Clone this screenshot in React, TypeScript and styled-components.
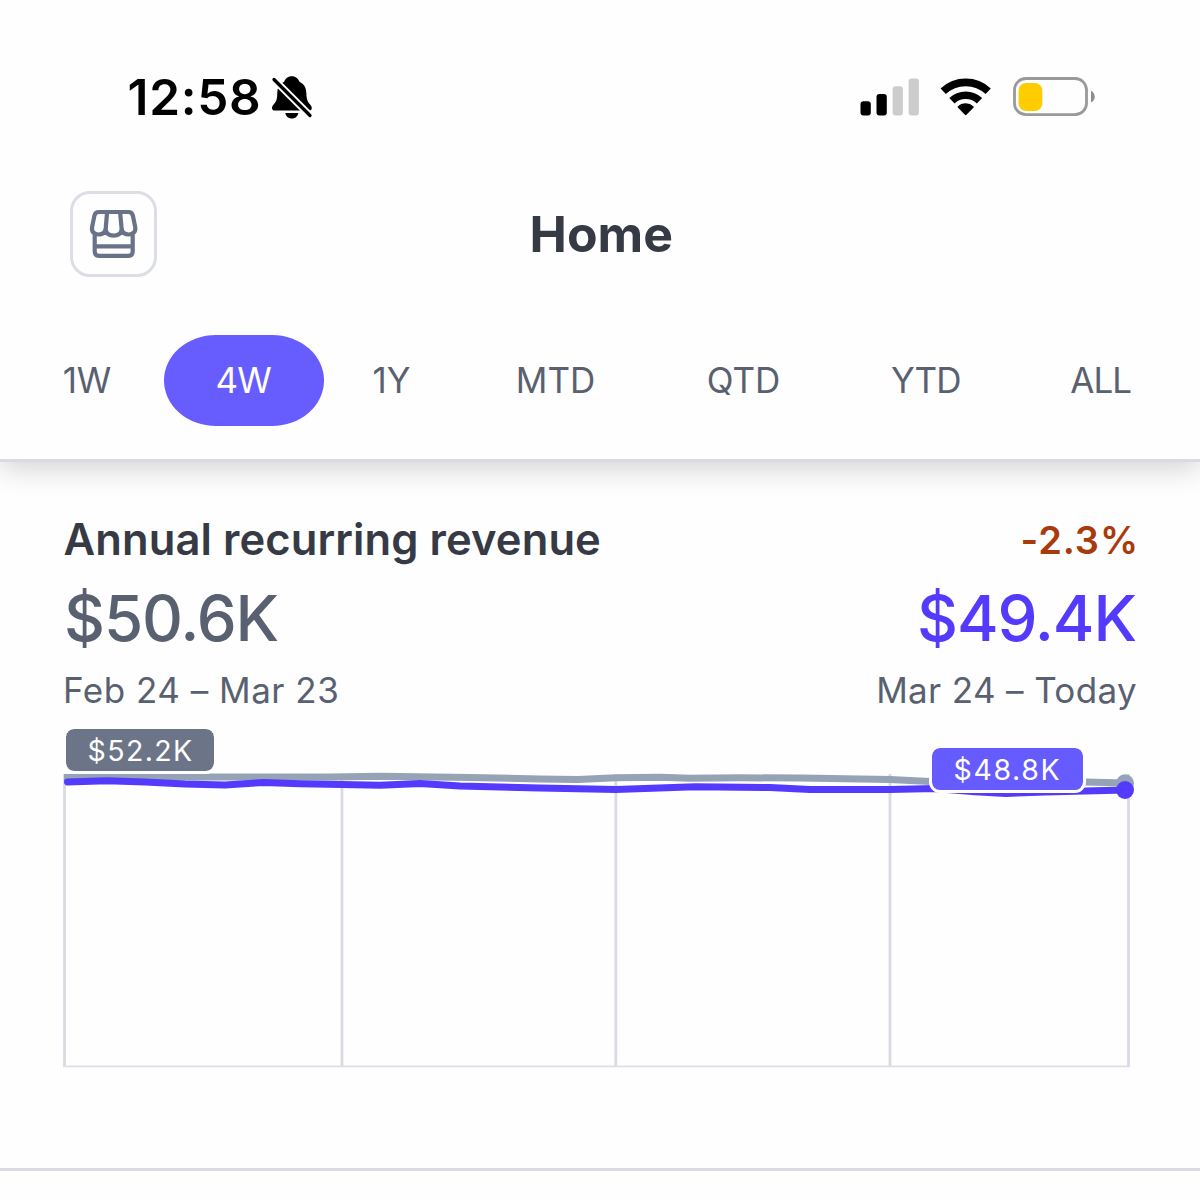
import React from "react";
import styled, { createGlobalStyle } from "styled-components";

const GlobalStyle = createGlobalStyle`
  * { box-sizing: border-box; }
  body { margin: 0; background: #fefefe; }
`;

const Screen = styled.main`
  width: 1200px;
  height: 1200px;
  overflow: hidden;
  display: flex;
  flex-direction: column;
  background: #fefefe;
  color: #353a44;
  font-family: Inter, "Liberation Sans", sans-serif;
  white-space: nowrap;
`;

const TopPanel = styled.header`
  position: relative;
  flex: none;
  height: 462px;
  background: #fefefe;
  border-bottom: 3px solid #d8dbe1;
  box-shadow: 0 8px 26px rgba(0, 0, 0, 0.16);
`;

const StatusBar = styled.div`
  display: flex;
  justify-content: space-between;
  align-items: center;
  height: 148px;
  padding: 46px 104px 0 127.5px;
`;

const Clock = styled.div`
  display: flex;
  align-items: center;
  gap: 10px;
  color: #000;
  font-size: 49.5px;
  font-weight: 600;
  letter-spacing: 0.7px;
  line-height: 60px;
`;

const StatusIcons = styled.div`
  display: flex;
  align-items: center;
`;

const NavBar = styled.nav`
  display: grid;
  grid-template-columns: 87px 1fr 87px;
  align-items: center;
  height: 172px;
  padding: 0 70px;
`;

const StoreButton = styled.button`
  display: flex;
  align-items: center;
  justify-content: center;
  width: 87px;
  height: 86px;
  padding: 0;
  border: 3px solid #dcdee6;
  border-radius: 20px;
  background: #fefefe;
`;

const Title = styled.h1`
  margin: 0;
  padding-left: 2.5px;
  text-align: center;
  font-size: 50px;
  font-weight: 700;
  letter-spacing: 0;
  line-height: 60px;
`;

const Tabs = styled.div`
  display: grid;
  grid-template-columns: 154px 160px 135px 193px 183px 183px 167px;
  margin: 15px 14px 0 10px;
`;

const Tab = styled.button<{ $active?: boolean; $tight?: boolean }>`
  height: 91px;
  padding: 0 ${(p) => (p.$tight ? 1.5 : 0)}px 1px 0;
  border: 0;
  border-radius: 52px / 45.5px;
  background: ${(p) => (p.$active ? "#675dff" : "transparent")};
  color: ${(p) => (p.$active ? "#fff" : "#596171")};
  font: 400 35px / 90px Inter, "Liberation Sans", sans-serif;
  letter-spacing: ${(p) => (p.$tight ? "-0.9px" : "0")};
`;

const Metric = styled.section`
  display: flex;
  flex-direction: column;
  flex: none;
  height: 708.5px;
  padding-top: 52px;
  border-bottom: 3px solid #dadae5;
`;

const MetricRow = styled.div<{ $height: number; $gap?: number }>`
  display: flex;
  justify-content: space-between;
  align-items: center;
  height: ${(p) => p.$height}px;
  margin-top: ${(p) => p.$gap ?? 0}px;
  padding: 0 64px;
`;

const MetricName = styled.h2`
  margin: 0 0 0 -0.5px;
  font-size: 43.5px;
  font-weight: 600;
  letter-spacing: 0.1px;
`;

const Change = styled.span`
  margin-right: -3px;
  padding-top: 2px;
  color: #a93a0b;
  font-size: 38px;
  font-weight: 600;
  letter-spacing: 0.9px;
`;

const Amount = styled.span<{ $current?: boolean }>`
  color: ${(p) => (p.$current ? "#533afd" : "#596171")};
  font-size: 63.5px;
  font-weight: 500;
  letter-spacing: -1.1px;
`;

const Period = styled.span<{ $spacing: number; $shift: number }>`
  margin-left: ${(p) => p.$shift}px;
  margin-right: ${(p) => -1 - p.$shift}px;
  color: #596171;
  font-size: 35px;
  letter-spacing: ${(p) => p.$spacing}px;
`;

const Chart = styled.div`
  position: relative;
  height: 350px;
  margin-top: 12px;
`;

const ChartLabel = styled.span<{ $current?: boolean }>`
  position: absolute;
  left: ${(p) => (p.$current ? 929 : 63)}px;
  top: ${(p) => (p.$current ? 22 : 3)}px;
  width: ${(p) => (p.$current ? 157 : 154)}px;
  height: 48px;
  padding-left: 21.5px;
  border: 3px solid #fefefe;
  border-radius: 11px;
  background: ${(p) => (p.$current ? "#665bff" : "#6c7488")};
  background-clip: padding-box;
  color: #fff;
  font-size: 28.5px;
  line-height: 44px;
  letter-spacing: ${(p) => (p.$current ? 1.6 : 1.4)}px;
`;

function MutedBell() {
  return (
    <svg width="42" height="44" viewBox="272 75.500 42 44">
      <path
        d="M292.700 76.700c-4 0-6.600 2.600-7.500 5.500-5 2.200-6.700 6-6.900 11-.2 6-.7 8.500-3.700 11.800-1.200 1.400-1.600 2.400-1.600 3.400 0 1.600 1.200 2.600 3 2.600h33.800c1.900 0 3-1 3-2.600 0-1-.5-2-1.700-3.400-3-3.300-3.500-5.800-3.800-11.800-.2-5-1.900-8.800-6.900-11-.9-2.900-3.600-5.500-7.700-5.500Z"
        fill="#000"
      />
      <path d="M286.300 113.500h13c-.6 3.300-3 5.500-6.500 5.500s-5.900-2.200-6.500-5.500Z" fill="#000" />
      <path d="M275 80 311 116" stroke="#fefefe" strokeWidth="7.400" strokeLinecap="round" />
      <path d="M275 80 311 116" stroke="#000" strokeWidth="3.300" strokeLinecap="round" />
    </svg>
  );
}

const signalBars = [
  { x: 860.5, y: 101.3, on: true },
  { x: 876.5, y: 94, on: true },
  { x: 892.6, y: 86.3, on: false },
  { x: 908.6, y: 78.6, on: false },
];

function StatusGlyphs() {
  return (
    <svg width="240" height="44" viewBox="856 75 240 44" fill="none">
      {signalBars.map((b) => (
        <rect key={b.x} x={b.x} y={b.y} width="10.300" height={115.6 - b.y} rx="3" fill={b.on ? "#000" : "#ccc"} />
      ))}
      <g stroke="#000" strokeWidth="7.600">
        <path d="M943.200 91.300a32.800 32.800 0 0 1 45 0" />
        <path d="M951.900 100.700a20 20 0 0 1 27.600 0" />
      </g>
      <path
        d="M965.700 114.600 958.300 107a10.800 10.800 0 0 1 14.800 0Z"
        fill="#000"
        stroke="#000"
        strokeWidth="1.400"
        strokeLinejoin="round"
      />
      <rect x="1014.500" y="78.500" width="72" height="36.200" rx="11.500" stroke="#999" strokeWidth="2.800" />
      <rect x="1018.600" y="83" width="23.700" height="28" rx="7.500" fill="#fc0" />
      <path d="M1091 91c2.300.8 3.700 3 3.700 5.700s-1.400 4.900-3.700 5.700Z" fill="#8c8c8c" />
    </svg>
  );
}

function StoreIcon() {
  return (
    <svg
      width="50"
      height="50"
      viewBox="88.800 209 50 50"
      fill="none"
      stroke="#6a7287"
      strokeWidth="4.200"
      strokeLinejoin="round"
      strokeLinecap="round"
    >
      <path d="M98.800 212h29.200c2.600 0 4.200 1.300 4.700 3.700l2.300 11.500c.9 4.500-2.300 7.300-6.400 7.300-3.900 0-6.300-2-7.100-4.800-.9 3.700-4 5.900-8 5.900s-7.200-2.200-8.100-5.900c-.8 2.800-3.200 4.800-7.100 4.800-4.300 0-7.300-2.800-6.400-7.300l2.300-11.500c.5-2.400 2-3.700 4.600-3.700Z" />
      <path d="m106.900 212-1.500 17.700M119.900 212l1.600 17.700M94.500 235v16.200c0 2.800 1.500 4.600 4.600 4.600h28.800c3.100 0 4.600-1.800 4.600-4.600V235M94.500 246.400h38" />
    </svg>
  );
}

const gridColumns = [64.5, 342, 615.8, 890, 1128.5];

function RevenueLines() {
  return (
    <svg width="1200" height="350" viewBox="0 723 1200 350" fill="none">
      {gridColumns.map((x) => (
        <path key={x} d={`M${x} 774V1067`} stroke="#d8dbe4" strokeWidth="2.800" />
      ))}
      <path d="M63 1066.300H1130" stroke="#dddfe8" strokeWidth="1.800" />
      <g strokeWidth="7" strokeLinejoin="round">
        <path
          d="M64 777.500 215 777 330 777 380 776.300 470 777.500 540 779 578 779.400 616 777.700 660 777.300 690 778.300 740 777.800 800 778 890 779.600 935 781.800 1085 782 1125 783"
          stroke="#95a3b5"
        />
        <path
          d="M67.500 782 107 780.700 145 782 185 784 225 785 264 782.400 300 783.700 342 784.600 380 785.300 420 783.400 460 786 540 787.900 616 789.500 695 786.700 770 787.500 810 789.500 890 789.500 935 788.500 975 791.800 1006 793.400 1045 792 1085 791 1125 790"
          stroke="#533afd"
          strokeLinecap="round"
        />
      </g>
      <circle cx="1125" cy="783.300" r="9" fill="#95a3b5" />
      <circle cx="1125" cy="790" r="9" fill="#533afd" />
    </svg>
  );
}

const ranges = [
  { label: "1W" },
  { label: "4W", active: true, tight: true },
  { label: "1Y" },
  { label: "MTD" },
  { label: "QTD" },
  { label: "YTD", tight: true },
  { label: "ALL", tight: true },
];

export default function App() {
  return (
    <>
      <GlobalStyle />
      <Screen>
        <TopPanel>
          <StatusBar>
            <Clock>
              12:58
              <MutedBell />
            </Clock>
            <StatusIcons>
              <StatusGlyphs />
            </StatusIcons>
          </StatusBar>
          <NavBar>
            <StoreButton aria-label="Store">
              <StoreIcon />
            </StoreButton>
            <Title>Home</Title>
          </NavBar>
          <Tabs>
            {ranges.map((r) => (
              <Tab key={r.label} $active={r.active} $tight={r.tight}>
                {r.label}
              </Tab>
            ))}
          </Tabs>
        </TopPanel>
        <Metric>
          <MetricRow $height={50}>
            <MetricName>Annual recurring revenue</MetricName>
            <Change>-2.3%</Change>
          </MetricRow>
          <MetricRow $height={80} $gap={13}>
            <Amount>$50.6K</Amount>
            <Amount $current>$49.4K</Amount>
          </MetricRow>
          <MetricRow $height={43} $gap={11}>
            <Period $spacing={0.5} $shift={-1}>
              Feb 24 – Mar 23
            </Period>
            <Period $spacing={0.35} $shift={0}>
              Mar 24 – Today
            </Period>
          </MetricRow>
          <Chart>
            <RevenueLines />
            <ChartLabel>$52.2K</ChartLabel>
            <ChartLabel $current>$48.8K</ChartLabel>
          </Chart>
        </Metric>
      </Screen>
    </>
  );
}
